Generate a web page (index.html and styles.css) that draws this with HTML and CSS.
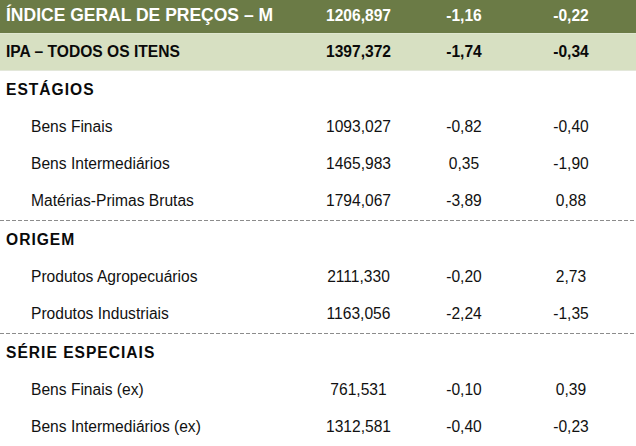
FILE: index.html
```html
<!DOCTYPE html>
<html lang="pt-BR">
<head>
<meta charset="utf-8">
<title>Índice Geral de Preços – M</title>
<link rel="stylesheet" href="styles.css">
</head>
<body>
<div class="table">
  <div class="row head">
    <div class="label">ÍNDICE GERAL DE PREÇOS – M</div>
    <div class="num">1206,897</div>
    <div class="num">-1,16</div>
    <div class="num">-0,22</div>
  </div>
  <div class="row total">
    <div class="label">IPA – TODOS OS ITENS</div>
    <div class="num">1397,372</div>
    <div class="num">-1,74</div>
    <div class="num">-0,34</div>
  </div>

  <div class="group">
    <div class="row section"><div class="label">ESTÁGIOS</div></div>
    <div class="row item">
      <div class="label">Bens Finais</div>
      <div class="num">1093,027</div>
      <div class="num">-0,82</div>
      <div class="num">-0,40</div>
    </div>
    <div class="row item">
      <div class="label">Bens Intermediários</div>
      <div class="num">1465,983</div>
      <div class="num">0,35</div>
      <div class="num">-1,90</div>
    </div>
    <div class="row item">
      <div class="label">Matérias-Primas Brutas</div>
      <div class="num">1794,067</div>
      <div class="num">-3,89</div>
      <div class="num">0,88</div>
    </div>
  </div>

  <div class="group">
    <div class="row section"><div class="label">ORIGEM</div></div>
    <div class="row item">
      <div class="label">Produtos Agropecuários</div>
      <div class="num">2111,330</div>
      <div class="num">-0,20</div>
      <div class="num">2,73</div>
    </div>
    <div class="row item">
      <div class="label">Produtos Industriais</div>
      <div class="num">1163,056</div>
      <div class="num">-2,24</div>
      <div class="num">-1,35</div>
    </div>
  </div>

  <div class="group last">
    <div class="row section"><div class="label">SÉRIE ESPECIAIS</div></div>
    <div class="row item">
      <div class="label">Bens Finais (ex)</div>
      <div class="num">761,531</div>
      <div class="num">-0,10</div>
      <div class="num">0,39</div>
    </div>
    <div class="row item">
      <div class="label">Bens Intermediários (ex)</div>
      <div class="num">1312,581</div>
      <div class="num">-0,40</div>
      <div class="num">-0,23</div>
    </div>
  </div>
</div>
</body>
</html>
```

FILE: styles.css
```css
* { box-sizing: border-box; }

html, body {
  margin: 0;
  padding: 0;
  background: #ffffff;
}

body {
  font-family: "Liberation Sans", Arial, sans-serif;
  font-size: 15.6px;
  color: #111111;
  width: 636px;
  overflow: hidden;
}

.table {
  display: flex;
  flex-direction: column;
}

.row {
  display: grid;
  grid-template-columns: 305px 107px 104px 110px;
  padding-right: 10px;
  align-items: center;
  height: 37px;
  line-height: 1;
}

.num {
  text-align: center;
}

.label {
  padding-left: 6px;
  white-space: nowrap;
}

.head {
  height: 34px;
  background: #6b7b46;
  color: #ffffff;
  font-weight: bold;
  border-bottom: 1px solid #dfe6cf;
  padding-bottom: 2px;
}

.head .label {
  font-size: 17.5px;
}

.total {
  height: 37px;
  background: #d7e0c2;
  color: #0a0a0a;
  font-weight: bold;
  border-bottom: 1px solid #e3e7da;
}

.group {
  display: flex;
  flex-direction: column;
  padding-bottom: 2px;
  background-image: repeating-linear-gradient(to right, #8c8c8c 0, #8c8c8c 4px, transparent 4px, transparent 6px);
  background-size: 100% 1px;
  background-position: left bottom;
  background-repeat: no-repeat;
}

.group.last {
  padding-bottom: 0;
  background-image: none;
}

.section {
  font-weight: bold;
  letter-spacing: 1px;
  color: #0a0a0a;
}

.item .label {
  padding-left: 31px;
}
```
